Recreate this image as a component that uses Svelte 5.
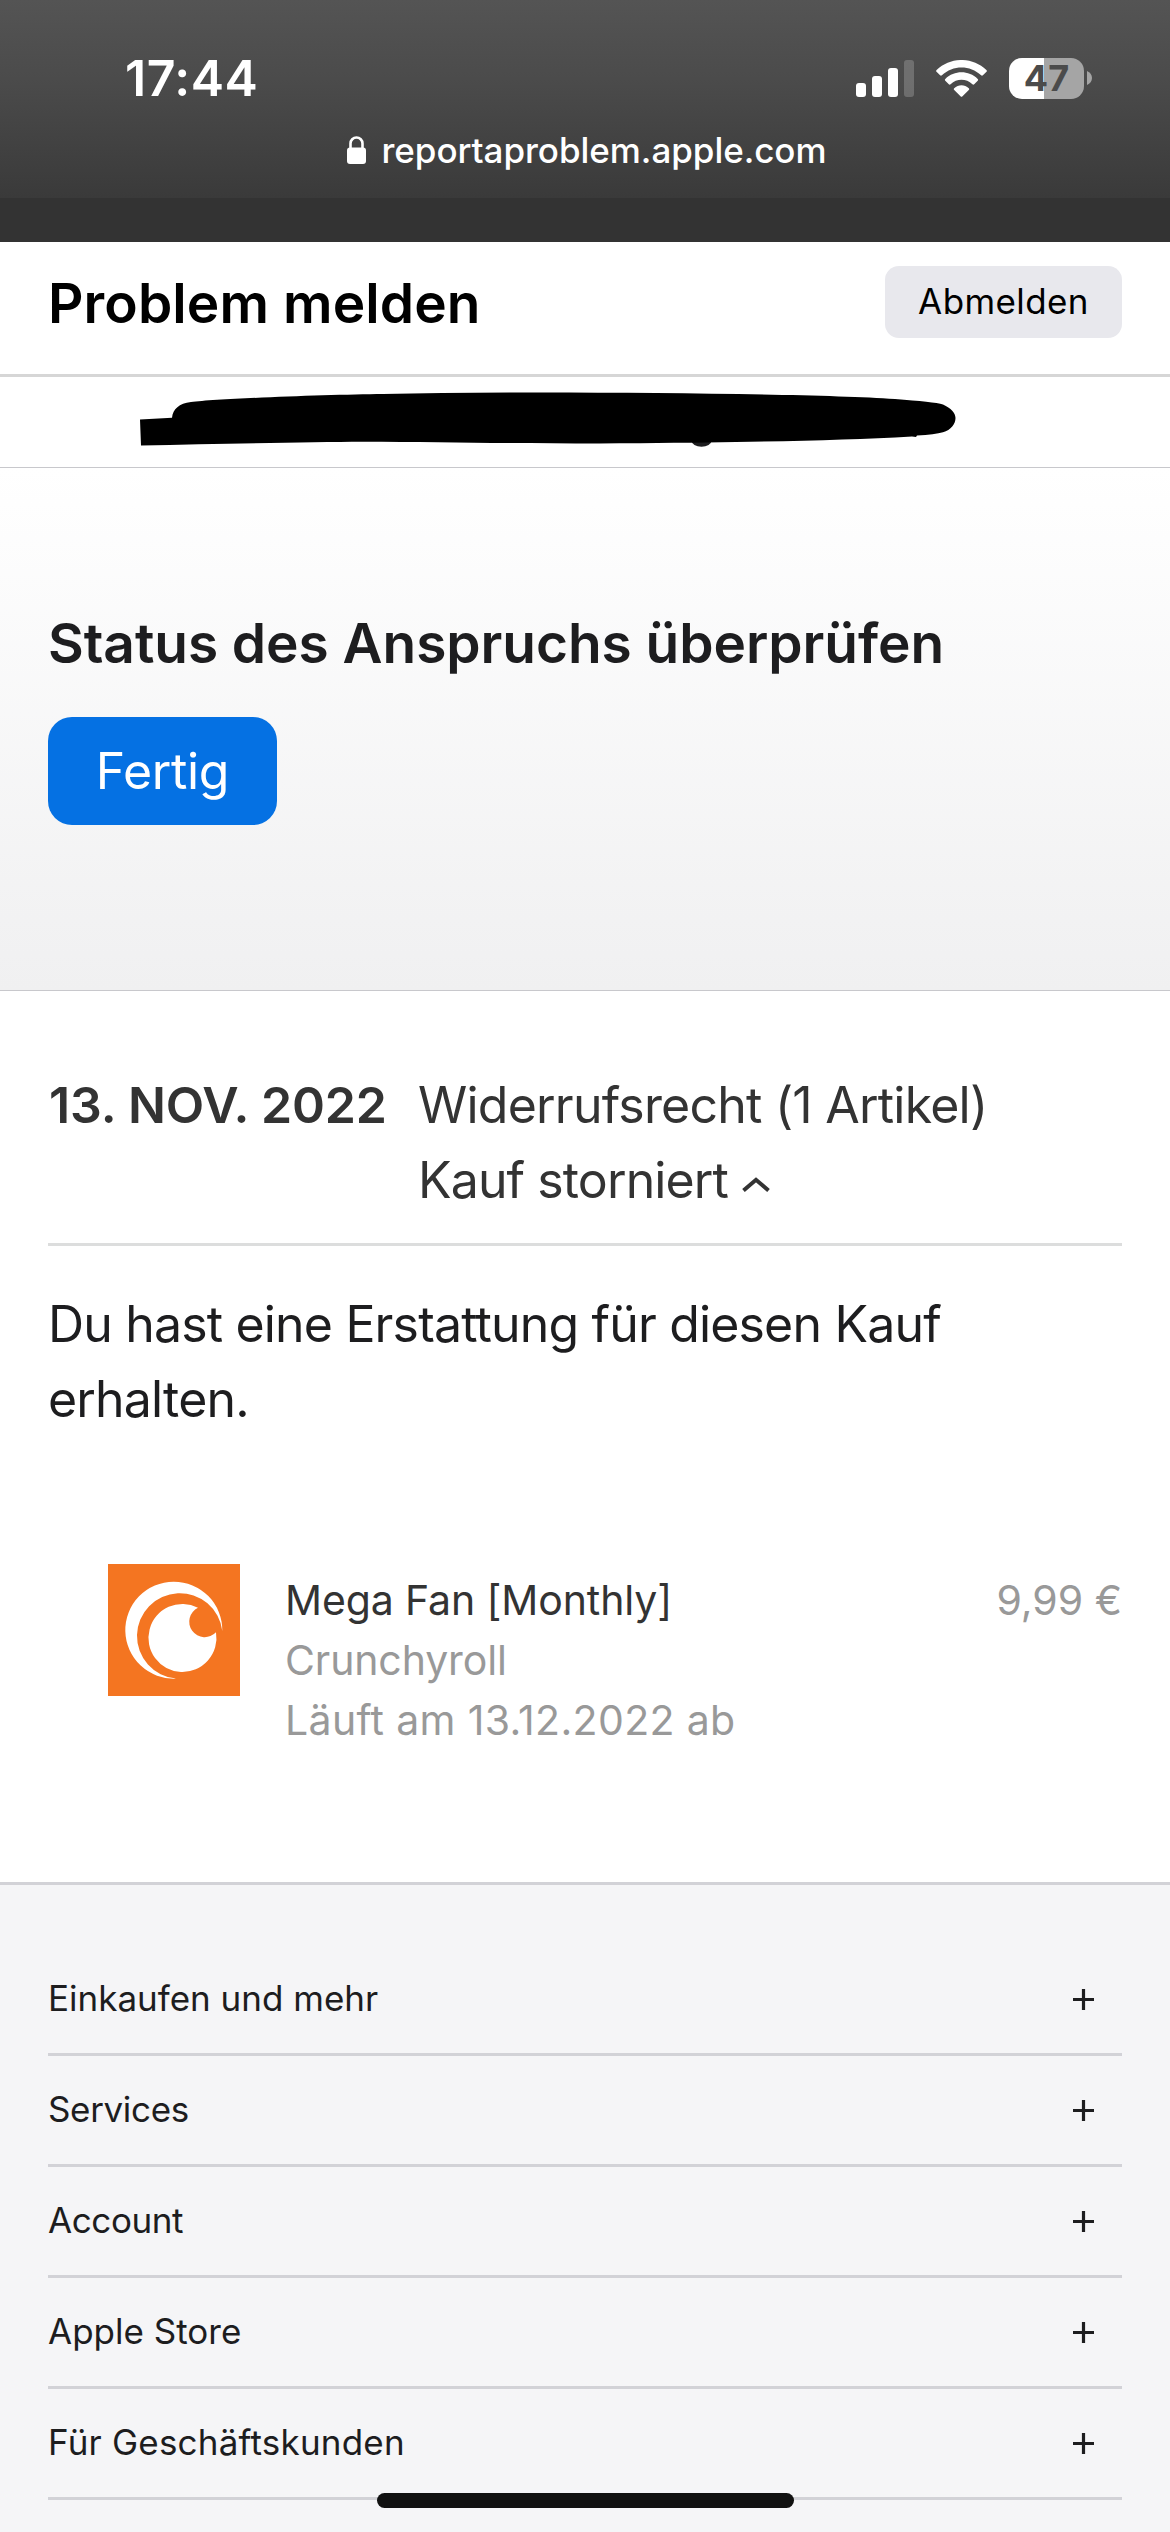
<script lang="ts">
	const address = 'reportaproblem.apple.com';

	const order = {
		date: '13. NOV. 2022',
		title: 'Widerrufsrecht (1 Artikel)',
		status: 'Kauf storniert',
		message: 'Du hast eine Erstattung für diesen Kauf erhalten.'
	};

	const item = {
		name: 'Mega Fan [Monthly]',
		publisher: 'Crunchyroll',
		expires: 'Läuft am 13.12.2022 ab',
		price: '9,99 €'
	};

	const footerLinks = [
		{ label: 'Einkaufen und mehr', tracking: 0 },
		{ label: 'Services', tracking: -0.35 },
		{ label: 'Account', tracking: -0.4 },
		{ label: 'Apple Store', tracking: 0 },
		{ label: 'Für Geschäftskunden', tracking: 0.2 }
	];
</script>

<div class="screen">
	<div class="browser-bar">
		<div class="status-row">
			<span class="time">17:44</span>
			<div class="indicators">
				<svg class="signal" width="58" height="37" viewBox="0 0 58 37">
					<rect x="0" y="23" width="10" height="14" rx="3" />
					<rect x="16" y="16" width="10" height="21" rx="3" />
					<rect x="32" y="8" width="10" height="29" rx="3" />
					<rect x="48" y="0" width="10" height="37" rx="3" opacity="0.2" />
				</svg>
				<svg class="wifi" width="51" height="37" viewBox="0 0 51 37">
					<path d="M.6 10.1C14.4-3.4 36.6-3.4 50.4 10.1c.6.6.6 1.2.1 1.7l-3.6 3.5c-.6.6-1.2.6-1.8 0-11-10.4-28.2-10.4-39.2 0-.6.6-1.2.6-1.8 0L.5 11.8c-.5-.5-.5-1.1.1-1.7z" />
					<path d="M9.3 19c9-8.9 23.4-8.9 32.4 0 .6.6.6 1.2 0 1.8l-3.5 3.4c-.6.6-1.2.6-1.8 0-6.2-5.9-15.6-5.9-21.8 0-.6.6-1.2.6-1.8 0l-3.5-3.4c-.6-.6-.6-1.2 0-1.8z" />
					<path d="M18.2 28.3c4.1-4 10.5-4 14.6 0 .6.6.6 1.1 0 1.7l-6.3 6.3c-.7.7-1.3.7-2 0L18.2 30c-.6-.6-.6-1.1 0-1.7z" />
				</svg>
				<div class="battery">
					<span class="battery-level">47</span>
					<svg class="battery-cap" width="5" height="14" viewBox="0 0 5 14">
						<path d="M0 0c3 1.200 5 3.800 5 7s-2 5.800-5 7z" />
					</svg>
				</div>
			</div>
		</div>
		<div class="address-row">
			<svg class="lock" width="19" height="28" viewBox="0 0 19 28">
				<path d="M3.500 13V7.500a6 6 0 0 1 12 0V13" />
				<rect x="0" y="11.500" width="19" height="16.500" rx="3" />
			</svg>
			<span>{address}</span>
		</div>
	</div>

	<header class="page-header">
		<h1>Problem melden</h1>
		<button class="sign-out">Abmelden</button>
	</header>

	<div class="account">
		<svg width="1170" height="90" viewBox="0 377 1170 90">
			<ellipse cx="701.500" cy="440.500" rx="10" ry="6.200" fill="#1d1d1f" />
			<path d="M140 419.500L172 417.700C173 409 179 403.500 191 402C220 398.500 330 394.500 383 394Q450 392.500 540 392.500C680 392.800 830 394.500 895 399C920 401 937 402.500 943 404.500C951 408 955.500 413 955.500 418C955.500 424 951 430 943 432.300Q935 434.500 917 435.500L916 437L912 436.500C840 440.500 760 442 640 443.300C540 443.800 460 442.300 363 441.700C310 442 220 444 141 445.500Z" />
		</svg>
	</div>

	<section class="hero">
		<h2>Status des Anspruchs überprüfen</h2>
		<button class="done">Fertig</button>
	</section>

	<main>
		<div class="order">
			<div class="order-date">{order.date}</div>
			<div class="order-info">
				<div>{order.title}</div>
				<div class="order-status">
					{order.status}<svg class="chevron" width="28" height="15" viewBox="0 0 28 15">
						<path d="M1.500 13.500L14 2.800l12.500 10.700" />
					</svg>
				</div>
			</div>
		</div>

		<p class="message">{order.message}</p>

		<div class="item">
			<svg class="item-icon" width="132" height="132" viewBox="0 0 132 132">
				<rect width="132" height="132" fill="#f47521" />
				<path d="M114.300 67A48.500 48.500 0 1 0 68 114.600A42.800 42.800 0 1 1 114.300 67z" />
				<path d="M90 43.700A34 34 0 1 0 108 68.300A15.500 15.500 0 1 1 90 43.700z" />
			</svg>
			<div class="item-text">
				<div class="item-name">{item.name}</div>
				<div class="item-publisher">{item.publisher}</div>
				<div class="item-expires">{item.expires}</div>
			</div>
			<div class="item-price">{item.price}</div>
		</div>
	</main>

	<footer>
		{#each footerLinks as link}
			<div class="footer-row">
				<span style="letter-spacing: {link.tracking}px">{link.label}</span>
				<svg width="21" height="21" viewBox="0 0 21 21">
					<path d="M10.500 0v21M0 10.500h21" />
				</svg>
			</div>
		{/each}
	</footer>

	<div class="home-indicator"></div>
</div>

<style>
	:global(body) {
		margin: 0;
		background: #f5f5f7;
	}

	.screen {
		position: relative;
		width: 1170px;
		height: 2532px;
		overflow: hidden;
		background: #fff;
		color: #1d1d1f;
		font-family: Inter, 'Liberation Sans', sans-serif;
		display: flex;
		flex-direction: column;
	}

	svg {
		display: block;
		flex: none;
	}

	h1,
	h2,
	p {
		margin: 0;
	}

	button {
		border: none;
		padding: 0;
		font-family: inherit;
		cursor: pointer;
	}

	.browser-bar {
		box-sizing: border-box;
		height: 242px;
		padding-top: 50px;
		border-bottom: 44px solid #333;
		background: linear-gradient(#545454, #4b4b4b 40%, #3a3a3a);
		background-clip: padding-box;
		color: #fff;
	}

	.status-row {
		display: flex;
		align-items: center;
		justify-content: space-between;
		height: 56px;
		padding: 0 78px 0 125px;
	}

	.time {
		font-size: 50px;
		font-weight: 600;
		line-height: 56px;
		letter-spacing: 0.5px;
	}

	.indicators {
		display: flex;
		align-items: center;
		fill: #fff;
	}

	.wifi {
		margin-left: 22px;
	}

	.battery {
		display: flex;
		align-items: center;
		gap: 3px;
		margin-left: 22px;
	}

	.battery-level {
		width: 75px;
		height: 41px;
		border-radius: 13px;
		background: linear-gradient(90deg, #fff 47%, #a5a5a5 47%);
		color: #4b4b4b;
		font-size: 36px;
		font-weight: 700;
		line-height: 41px;
		text-align: center;
	}

	.battery-cap {
		fill: #a5a5a5;
	}

	.address-row {
		display: flex;
		align-items: center;
		justify-content: center;
		gap: 15px;
		height: 88px;
		padding-left: 4px;
		font-size: 35px;
		font-weight: 500;
		letter-spacing: -0.05px;
	}

	.lock {
		fill: #fff;
	}

	.lock path {
		fill: none;
		stroke: #fff;
		stroke-width: 2.6;
	}

	.page-header {
		display: flex;
		align-items: flex-start;
		justify-content: space-between;
		box-sizing: border-box;
		height: 135px;
		padding: 24px 48px 0;
		border-bottom: 3px solid #d6d6d6;
	}

	h1 {
		color: #000;
		font-size: 55px;
		font-weight: 600;
		line-height: 74px;
		letter-spacing: 0.1px;
	}

	.sign-out {
		width: 237px;
		height: 72px;
		padding-bottom: 2px;
		border-radius: 14px;
		background: #e8e8ed;
		color: #000;
		font-size: 35px;
		line-height: 70px;
		letter-spacing: 0.4px;
	}

	.account {
		height: 90px;
		border-bottom: 1px solid #c8c8cc;
	}

	.hero {
		box-sizing: border-box;
		height: 523px;
		padding: 142px 48px 0;
		border-bottom: 1px solid #c8c8cc;
		background: linear-gradient(#fff, #f0f0f1);
	}

	h2 {
		font-size: 55px;
		font-weight: 600;
		line-height: 66px;
		letter-spacing: -0.05px;
	}

	.done {
		width: 229px;
		height: 108px;
		margin-top: 41px;
		border-radius: 24px;
		background: #0571e3;
		color: #fff;
		font-size: 50px;
		line-height: 108px;
		letter-spacing: -0.35px;
	}

	main {
		box-sizing: border-box;
		height: 891px;
		padding: 77px 48px 0;
	}

	.order {
		display: grid;
		grid-template-columns: 370px 1fr;
		padding-bottom: 25px;
		border-bottom: 3px solid #dcdddd;
		color: #333;
		font-size: 50px;
		line-height: 75px;
		letter-spacing: -0.78px;
	}

	.order-date {
		padding-left: 1px;
		font-weight: 600;
		letter-spacing: -0.12px;
	}

	.order-status {
		letter-spacing: -0.89px;
	}

	.chevron {
		display: inline-block;
		margin-left: 14px;
		vertical-align: 6px;
		fill: none;
		stroke: #333;
		stroke-width: 4;
	}

	.message {
		margin-top: 41px;
		font-size: 50px;
		line-height: 75px;
		letter-spacing: -0.83px;
	}

	.item {
		display: flex;
		align-items: flex-start;
		margin-top: 127px;
		padding-left: 60px;
		font-size: 41px;
		line-height: 60px;
		color: #999;
	}

	.item-icon {
		fill: #fff;
	}

	.item-text {
		flex: 1;
		margin: 6px 0 0 45px;
	}

	.item-name {
		color: #333;
		letter-spacing: -0.12px;
	}

	.item-publisher {
		letter-spacing: -0.12px;
	}

	.item-expires {
		letter-spacing: 0.34px;
	}

	.item-price {
		margin-top: 6px;
		letter-spacing: 0;
	}

	footer {
		flex: 1;
		padding: 60px 48px 0;
		border-top: 3px solid #d2d2d7;
		background: #f5f5f7;
	}

	.footer-row {
		display: flex;
		align-items: center;
		justify-content: space-between;
		height: 108px;
		padding-right: 28px;
		border-bottom: 3px solid #d2d2d7;
		font-size: 35px;
	}

	.footer-row span {
		padding-bottom: 2px;
	}

	.footer-row path {
		stroke: #1d1d1f;
		stroke-width: 3.2;
	}

	.home-indicator {
		position: absolute;
		left: 377px;
		bottom: 24px;
		width: 417px;
		height: 15px;
		border-radius: 8px;
		background: #111;
	}
</style>
